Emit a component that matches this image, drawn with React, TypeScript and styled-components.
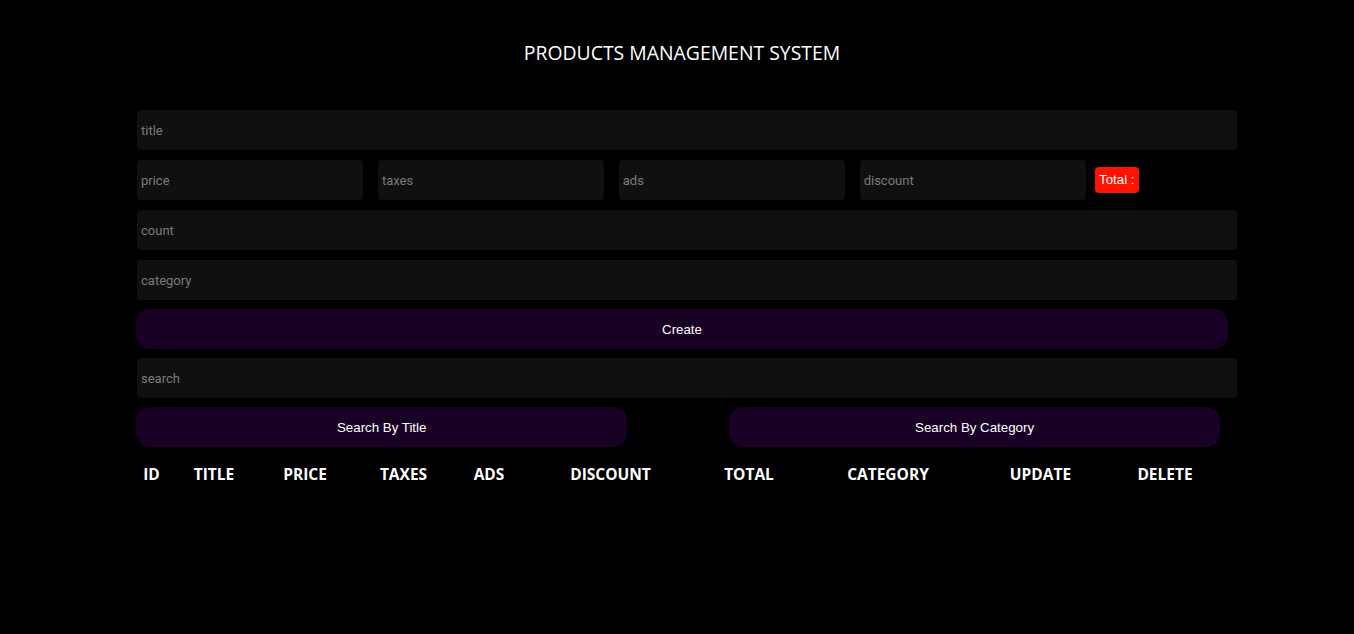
import React from "react";
import styled, { createGlobalStyle } from "styled-components";

const Global = createGlobalStyle`
  html, body { margin: 0; padding: 0; background: #000; }
  body { color: #fff; font-family: "Open Sans", "Liberation Sans", sans-serif; }
  * { box-sizing: border-box; }
`;

const Page = styled.div`
  width: 1092px;
  margin-left: 136px;
  padding-top: 39px;
`;

const Heading = styled.h2`
  margin: 0 0 44px;
  text-align: center;
  font-family: "Open Sans", sans-serif;
  font-weight: 400;
  font-size: 19.4px;
  line-height: 27px;
  color: #fff;
`;

const Field = styled.input<{ $w?: string }>`
  display: block;
  width: ${(p) => p.$w ?? "1100px"};
  height: 40px;
  margin-left: 1px;
  padding: 4px;
  border: none;
  outline: none;
  border-radius: 4px;
  background: #111011;
  color: #fff;
  font-family: Roboto, "Liberation Sans", sans-serif;
  font-size: 13px;
  &::placeholder { color: #7a7a7a; }
`;

const Stack = styled.div<{ $gap: number }>`
  display: flex;
  flex-direction: column;
  gap: ${(p) => p.$gap}px;
`;

const PriceRow = styled.div`
  display: flex;
  align-items: center;
  gap: 14.5px;
  margin-left: 1px;
`;

const PriceField = styled(Field)`
  margin-left: 0;
  flex: none;
`;

const TotalBadge = styled.small`
  margin-left: -5.5px;
  padding: 5px 4px;
  border-radius: 4px;
  background: #ff1300;
  color: #fff;
  font-family: "Liberation Sans", Arial, sans-serif;
  font-size: 13.3px;
  line-height: 16px;
`;

const Button = styled.button<{ $w?: string }>`
  display: block;
  width: ${(p) => p.$w ?? "100%"};
  height: 40px;
  border: none;
  border-radius: 14px;
  background: #190025;
  color: #fff;
  cursor: pointer;
  font-family: "Liberation Sans", Arial, sans-serif;
  font-size: 13.3px;
`;

const ButtonRow = styled.div`
  display: flex;
  gap: 101.5px;
`;

const Table = styled.table`
  width: 1092px;
  margin-top: 17px;
  border-collapse: collapse;
  table-layout: fixed;
`;

const Th = styled.th`
  padding: 0;
  text-align: center;
  font-family: "Open Sans", sans-serif;
  font-weight: 700;
  font-size: 15.5px;
  line-height: 20px;
  color: #fff;
`;

const columns: [string, number][] = [
  ["ID", 31],
  ["TITLE", 94],
  ["PRICE", 88],
  ["TAXES", 109],
  ["ADS", 62],
  ["DISCOUNT", 181],
  ["TOTAL", 96],
  ["CATEGORY", 182],
  ["UPDATE", 123],
  ["DELETE", 126],
];

export default function App() {
  return (
    <>
      <Global />
      <Page>
        <Heading>PRODUCTS MANAGEMENT SYSTEM</Heading>
        <Stack $gap={10}>
          <Field placeholder="title" />
          <PriceRow>
            <PriceField $w="226.4px" placeholder="price" />
            <PriceField $w="226.4px" placeholder="taxes" />
            <PriceField $w="226.4px" placeholder="ads" />
            <PriceField $w="226.4px" placeholder="discount" />
            <TotalBadge>Total :</TotalBadge>
          </PriceRow>
          <Field placeholder="count" />
          <Field placeholder="category" />
        </Stack>
        <Stack $gap={9} style={{ marginTop: 9 }}>
          <Button>Create</Button>
          <Field placeholder="search" />
          <ButtonRow>
            <Button $w="491.4px">Search By Title</Button>
            <Button $w="491.4px">Search By Category</Button>
          </ButtonRow>
        </Stack>
        <Table>
          <colgroup>
            {columns.map(([n, w]) => (
              <col key={n} style={{ width: w }} />
            ))}
          </colgroup>
          <thead>
            <tr>
              {columns.map(([n]) => (
                <Th key={n}>{n}</Th>
              ))}
            </tr>
          </thead>
        </Table>
      </Page>
    </>
  );
}
